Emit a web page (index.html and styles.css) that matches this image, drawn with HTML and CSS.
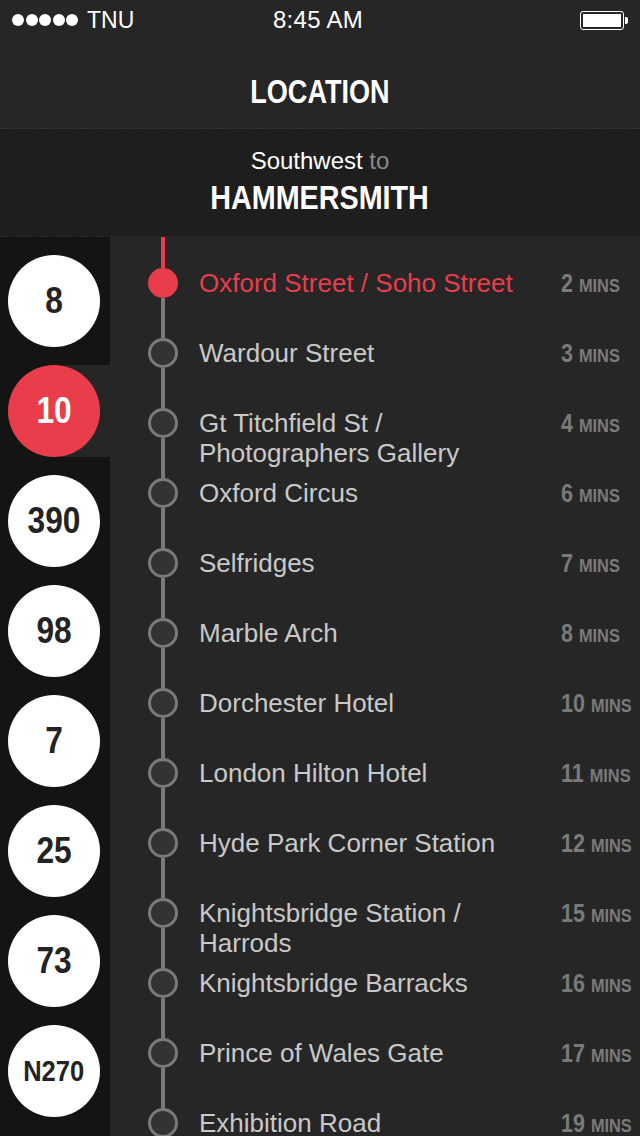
FILE: index.html
```html
<!DOCTYPE html>
<html lang="en">
<head>
  <meta charset="UTF-8" />
  <meta name="viewport" content="width=device-width, initial-scale=1" />
  <title>Location</title>
  <link rel="stylesheet" href="styles.css">
</head>
<body>
  <div class="status">
    <div class="carrier">
      <span class="signal"><i></i><i></i><i></i><i></i><i></i></span>
      TNU
    </div>
    <div class="clock">8:45 AM</div>
    <div class="battery"><span></span></div>
  </div>

  <header class="nav">
    <h1>LOCATION</h1>
  </header>

  <div class="route">
    <div class="direction">Southwest <span>to</span></div>
    <div class="dest"><span>HAMMERSMITH</span></div>
  </div>

  <main class="board">
    <aside class="buses">
      <div class="bus"><span><em>8</em></span></div>
      <div class="bus active"><span><em>10</em></span></div>
      <div class="bus"><span><em>390</em></span></div>
      <div class="bus"><span><em>98</em></span></div>
      <div class="bus"><span><em>7</em></span></div>
      <div class="bus"><span><em>25</em></span></div>
      <div class="bus"><span><em>73</em></span></div>
      <div class="bus small"><span><em>N270</em></span></div>
    </aside>

    <ul class="stops">
      <li class="stop current">
        <div class="track"><b class="seg"></b><b class="dot"></b><b class="seg"></b></div>
        <div class="name">Oxford Street / Soho Street</div>
        <div class="eta">2 <small>MINS</small></div>
      </li>
      <li class="stop">
        <div class="track"><b class="seg"></b><b class="dot"></b><b class="seg"></b></div>
        <div class="name">Wardour Street</div>
        <div class="eta">3 <small>MINS</small></div>
      </li>
      <li class="stop">
        <div class="track"><b class="seg"></b><b class="dot"></b><b class="seg"></b></div>
        <div class="name">Gt Titchfield St /<br>Photographers Gallery</div>
        <div class="eta">4 <small>MINS</small></div>
      </li>
      <li class="stop">
        <div class="track"><b class="seg"></b><b class="dot"></b><b class="seg"></b></div>
        <div class="name">Oxford Circus</div>
        <div class="eta">6 <small>MINS</small></div>
      </li>
      <li class="stop">
        <div class="track"><b class="seg"></b><b class="dot"></b><b class="seg"></b></div>
        <div class="name">Selfridges</div>
        <div class="eta">7 <small>MINS</small></div>
      </li>
      <li class="stop">
        <div class="track"><b class="seg"></b><b class="dot"></b><b class="seg"></b></div>
        <div class="name">Marble Arch</div>
        <div class="eta">8 <small>MINS</small></div>
      </li>
      <li class="stop">
        <div class="track"><b class="seg"></b><b class="dot"></b><b class="seg"></b></div>
        <div class="name">Dorchester Hotel</div>
        <div class="eta">10 <small>MINS</small></div>
      </li>
      <li class="stop">
        <div class="track"><b class="seg"></b><b class="dot"></b><b class="seg"></b></div>
        <div class="name">London Hilton Hotel</div>
        <div class="eta">11 <small>MINS</small></div>
      </li>
      <li class="stop">
        <div class="track"><b class="seg"></b><b class="dot"></b><b class="seg"></b></div>
        <div class="name">Hyde Park Corner Station</div>
        <div class="eta">12 <small>MINS</small></div>
      </li>
      <li class="stop">
        <div class="track"><b class="seg"></b><b class="dot"></b><b class="seg"></b></div>
        <div class="name">Knightsbridge Station /<br>Harrods</div>
        <div class="eta">15 <small>MINS</small></div>
      </li>
      <li class="stop">
        <div class="track"><b class="seg"></b><b class="dot"></b><b class="seg"></b></div>
        <div class="name">Knightsbridge Barracks</div>
        <div class="eta">16 <small>MINS</small></div>
      </li>
      <li class="stop">
        <div class="track"><b class="seg"></b><b class="dot"></b><b class="seg"></b></div>
        <div class="name">Prince of Wales Gate</div>
        <div class="eta">17 <small>MINS</small></div>
      </li>
      <li class="stop">
        <div class="track"><b class="seg"></b><b class="dot"></b><b class="seg"></b></div>
        <div class="name">Exhibition Road</div>
        <div class="eta">19 <small>MINS</small></div>
      </li>
    </ul>
  </main>
</body>
</html>
```

FILE: styles.css
```css
:root {
  --red: #e93d4b;
  --grey: #7a7a7a;
}
*, *::before, *::after {
  box-sizing: border-box; margin: 0; padding: 0;
}
html, body {
  height: 100%;
  overflow: hidden;
}
body {
  font-family: 'Liberation Sans', Arial, sans-serif;
  background: #262626;
  color: #fff;
  display: flex;
  flex-direction: column;
}

/* status bar */
.status {
  height: 40px;
  display: flex;
  align-items: center;
  justify-content: space-between;
  padding: 0 12px;
  font-size: 23px;
}
.carrier {
  display: flex;
  align-items: center;
  gap: 9px;
  width: 160px;
}
.signal {
  display: flex;
  gap: 1.5px;
}
.signal i {
  width: 12px;
  height: 12px;
  border-radius: 50%;
  background: #fff;
}
.clock {
  text-align: center;
  font-size: 24px;
  letter-spacing: 0.3px;
  margin-left: -4px;
}
.battery {
  width: 160px;
  display: flex;
  justify-content: flex-end;
}
.battery span {
  width: 44px;
  height: 19px;
  border: 1.5px solid #fff;
  border-radius: 3px;
  padding: 2px;
  margin-right: 1px;
  background: #fff;
  background-clip: content-box;
}
.battery::after {
  content: '';
  align-self: center;
  width: 3px;
  height: 7px;
  background: #fff;
  border-radius: 0 2px 2px 0;
}

/* nav */
.nav {
  height: 89px;
  display: flex;
  align-items: center;
  justify-content: center;
  padding-top: 14px;
  border-bottom: 1px dashed #363636;
}
.nav h1 {
  font-weight: 700;
  font-size: 33px;
  line-height: 1;
  transform: scaleX(0.82);
}

.route {
  height: 108px;
  background: #1e1e1e;
  text-align: center;
  padding-top: 18px;
  border-bottom: 1px dashed #2c2c2c;
}
.direction {
  font-size: 24px;
  line-height: 28px;
}
.direction span {
  color: #8a8a8a;
}
.dest {
  font-weight: 700;
  font-size: 33px;
  line-height: 46px;
}
.dest span {
  display: inline-block;
  transform: scaleX(0.87);
}

/* board */
.board {
  flex: 1;
  display: flex;
  min-height: 0;
}
.buses {
  width: 110px;
  background: #141414;
  padding-top: 9px;
  flex-shrink: 0;
}
.bus {
  height: 110px;
  display: flex;
  align-items: center;
  padding-left: 8px;
  position: relative;
}
.bus span {
  width: 92px;
  height: 92px;
  border-radius: 50%;
  background: #fff;
  color: #232323;
  display: flex;
  align-items: center;
  justify-content: center;
  font-weight: 700;
  font-size: 36px;
  position: relative;
  z-index: 1;
}
.bus em {
  font-style: normal;
  display: inline-block;
  transform: scaleX(0.88);
}
.bus.small span {
  font-size: 29px;
}
.bus.active span {
  background: var(--red);
  color: #fff;
}
.bus.active::before {
  content: '';
  position: absolute;
  left: 63px;
  right: 0;
  top: 9px;
  bottom: 9px;
  background: #262626;
}

.stops {
  list-style: none;
  flex: 1;
  padding-left: 38px;
}
.stop {
  height: 70px;
  display: flex;
  align-items: flex-start;
}
.stop:first-child {
  height: 81px;
}
.track {
  width: 30px;
  height: 100%;
  display: flex;
  flex-direction: column;
  align-items: center;
  flex-shrink: 0;
}
.seg {
  flex: 1;
  width: 4px;
  background: var(--grey);
}
.seg:first-child {
  flex: none;
  height: 20px;
}
.stop:first-child .seg:first-child {
  height: 31px;
}
.dot {
  width: 30px;
  height: 30px;
  border-radius: 50%;
  border: 3px solid var(--grey);
  background: #333;
}
.current .seg:first-child,
.current .dot {
  background: var(--red);
  border-color: var(--red);
}
.name {
  flex: 1;
  margin-left: 21px;
  padding-top: 20px;
  font-size: 26px;
  line-height: 30px;
  color: #c9c9c9;
  white-space: nowrap;
}
.stop:first-child .name,
.stop:first-child .eta {
  padding-top: 31px;
}
.current .name {
  color: var(--red);
}
.eta {
  width: 79px;
  flex-shrink: 0;
  padding-top: 20px;
  font-weight: 700;
  font-size: 25px;
  line-height: 30px;
  color: var(--grey);
  white-space: nowrap;
  transform: scaleX(0.86);
  transform-origin: left center;
}
.eta small {
  font-size: 19px;
}
```
